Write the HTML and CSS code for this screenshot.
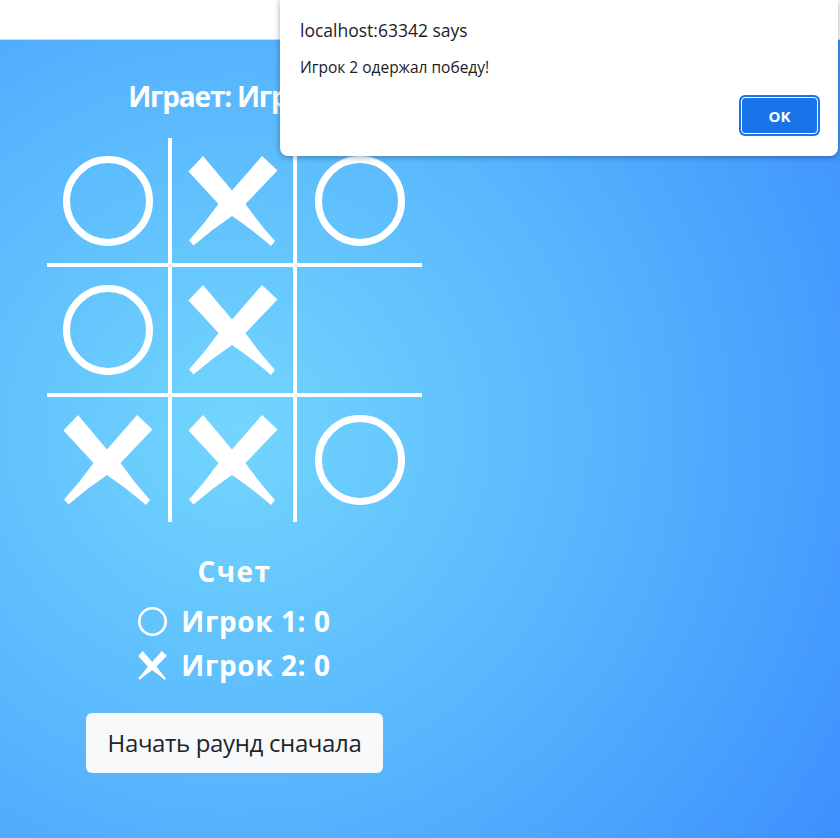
FILE: index.html
```html
<!DOCTYPE html>
<html lang="ru">
<head>
<meta charset="utf-8">
<title>Крестики-нолики</title>
<link rel="stylesheet" href="styles.css">
</head>
<body>
<div class="topbar"></div>
<main class="page">
  <div class="game">
    <h1 class="turn">Играет: Игрок 2</h1>
    <div class="board">
      <div class="cell"><svg class="mark" viewBox="0 0 90 90"><circle cx="45" cy="45" r="41.5" class="o"/></svg></div>
      <div class="cell"><svg class="mark" viewBox="0 0 90 90"><path class="x" d="M0.5 15.5 L15 0 L44 34.5 L74 0 L89.5 14.5 L57.5 48 Q71.1 67.45 87 85 L83 90 Q64.4 73.8 44 60 Q23.85 73.55 5.5 89.5 L1 84.5 Q16.9 67.2 30.5 48 Z"/></svg></div>
      <div class="cell"><svg class="mark" viewBox="0 0 90 90"><circle cx="45" cy="45" r="41.5" class="o"/></svg></div>
      <div class="cell"><svg class="mark" viewBox="0 0 90 90"><circle cx="45" cy="45" r="41.5" class="o"/></svg></div>
      <div class="cell"><svg class="mark" viewBox="0 0 90 90"><path class="x" d="M0.5 15.5 L15 0 L44 34.5 L74 0 L89.5 14.5 L57.5 48 Q71.1 67.45 87 85 L83 90 Q64.4 73.8 44 60 Q23.85 73.55 5.5 89.5 L1 84.5 Q16.9 67.2 30.5 48 Z"/></svg></div>
      <div class="cell"></div>
      <div class="cell"><svg class="mark" viewBox="0 0 90 90"><path class="x" d="M0.5 15.5 L15 0 L44 34.5 L74 0 L89.5 14.5 L57.5 48 Q71.1 67.45 87 85 L83 90 Q64.4 73.8 44 60 Q23.85 73.55 5.5 89.5 L1 84.5 Q16.9 67.2 30.5 48 Z"/></svg></div>
      <div class="cell"><svg class="mark" viewBox="0 0 90 90"><path class="x" d="M0.5 15.5 L15 0 L44 34.5 L74 0 L89.5 14.5 L57.5 48 Q71.1 67.45 87 85 L83 90 Q64.4 73.8 44 60 Q23.85 73.55 5.5 89.5 L1 84.5 Q16.9 67.2 30.5 48 Z"/></svg></div>
      <div class="cell"><svg class="mark" viewBox="0 0 90 90"><circle cx="45" cy="45" r="41.5" class="o"/></svg></div>
    </div>
    <h2 class="score-title">Счет</h2>
    <div class="score-row">
      <svg class="score-icon" viewBox="0 0 29 29"><circle cx="14.5" cy="14.5" r="13.2" class="o-small"/></svg>
      <span>Игрок 1: 0</span>
    </div>
    <div class="score-row">
      <svg class="score-icon" viewBox="0 0 90 90"><path class="x" d="M0.5 15.5 L15 0 L44 34.5 L74 0 L89.5 14.5 L57.5 48 Q71.1 67.45 87 85 L83 90 Q64.4 73.8 44 60 Q23.85 73.55 5.5 89.5 L1 84.5 Q16.9 67.2 30.5 48 Z"/></svg>
      <span>Игрок 2: 0</span>
    </div>
    <button class="restart">Начать раунд сначала</button>
  </div>
</main>
<div class="alert">
  <div class="alert-title">localhost:63342 says</div>
  <div class="alert-msg">Игрок 2 одержал победу!</div>
  <div class="alert-actions"><button class="alert-ok">OK</button></div>
</div>
</body>
</html>
```
FILE: styles.css
```css
* { box-sizing: border-box; }
html, body { margin: 0; padding: 0; }
body {
  font-family: "Open Sans", "Noto Sans", sans-serif;
  background: #fff;
  width: 840px;
  height: 838px;
  overflow: hidden;
}
.topbar {
  height: 40px;
  background: #fff;
  border-bottom: 1px solid #d9d9d9;
}
.page {
  height: 798px;
  background: radial-gradient(circle farthest-corner at 235px 390px, #72d6fe 0%, #5ab9fd 45%, #3c90fe 100%);
  overflow: hidden;
}
.game {
  width: 375px;
  margin-left: 47px;
  display: flex;
  flex-direction: column;
  align-items: center;
  color: #fff;
}
.turn {
  margin: 39px 0 0;
  font-size: 28px;
  line-height: 34px;
  font-weight: 700;
  letter-spacing: -1.2px;
  white-space: nowrap;
}
.board {
  margin-top: 25px;
  display: grid;
  grid-template-columns: 125px 125px 125px;
  grid-template-rows: 129px 130px 125px;
}
.cell {
  display: flex;
  align-items: center;
  justify-content: center;
  border-color: #fff;
  border-style: solid;
  border-width: 0;
}
.cell:nth-child(3n+1), .cell:nth-child(3n+2) { border-right-width: 4px; }
.cell:nth-child(-n+6) { border-bottom-width: 4px; }
.mark { width: 90px; height: 90px; display: block; }
.o { fill: none; stroke: #fff; stroke-width: 7; }
.x { fill: #fff; }
.score-title {
  margin: 32px 0 0;
  font-size: 28px;
  line-height: 34px;
  font-weight: 700;
  letter-spacing: 1.5px;
}
.score-row {
  display: flex;
  align-items: center;
  gap: 14px;
  height: 44px;
  font-size: 28px;
  font-weight: 700;
  line-height: 44px;
  letter-spacing: 0.6px;
}
.score-title + .score-row { margin-top: 11px; }
.score-icon { width: 29px; height: 29px; display: block; }
.o-small { fill: none; stroke: #fff; stroke-width: 2.6; }
.restart {
  margin-top: 26px;
  height: 60px;
  padding: 0 22px;
  border: none;
  border-radius: 6px;
  background: #f8f9fa;
  color: #212529;
  font-family: "Open Sans", "Noto Sans", sans-serif;
  font-size: 24px;
  line-height: 36px;
  letter-spacing: -0.35px;
}
.alert {
  position: absolute;
  top: 0;
  left: 280px;
  width: 558px;
  height: 156px;
  background: #fff;
  border-radius: 0 0 8px 8px;
  box-shadow: 0 1px 6px rgba(0, 0, 0, 0.35);
  padding: 0 18px 0 20px;
  color: #202124;
}
.alert-title {
  margin-top: 17px;
  font-size: 17.5px;
  line-height: 26px;
}
.alert-msg {
  margin-top: 13px;
  font-size: 15.5px;
  line-height: 22px;
}
.alert-actions {
  display: flex;
  justify-content: flex-end;
  margin-top: 17px;
}
.alert-ok {
  width: 77px;
  height: 37px;
  margin: 2px;
  border: 1px solid #fff;
  border-radius: 4px;
  box-shadow: 0 0 0 2px #1a73e8;
  background: #1a73e8;
  color: #fff;
  font-family: "Open Sans", "Noto Sans", sans-serif;
  font-size: 15px;
  font-weight: 700;
}
```
